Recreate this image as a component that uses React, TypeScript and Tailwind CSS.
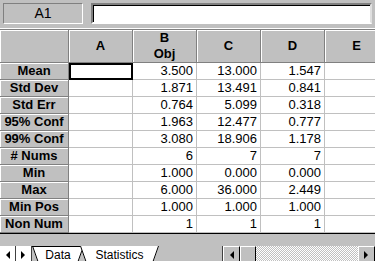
import React from "react";

type StatRow = {
  label: string;
  values: string[];
};

const columns = ["A", "B", "C", "D", "E"];

const stats: StatRow[] = [
  { label: "Mean", values: ["", "3.500", "13.000", "1.547", ""] },
  { label: "Std Dev", values: ["", "1.871", "13.491", "0.841", ""] },
  { label: "Std Err", values: ["", "0.764", "5.099", "0.318", ""] },
  { label: "95% Conf", values: ["", "1.963", "12.477", "0.777", ""] },
  { label: "99% Conf", values: ["", "3.080", "18.906", "1.178", ""] },
  { label: "# Nums", values: ["", "6", "7", "7", ""] },
  { label: "Min", values: ["", "1.000", "0.000", "0.000", ""] },
  { label: "Max", values: ["", "6.000", "36.000", "2.449", ""] },
  { label: "Min Pos", values: ["", "1.000", "1.000", "1.000", ""] },
  { label: "Non Num", values: ["", "1", "1", "1", ""] },
];

const headerCell =
  "bg-[#c0c0c0] border-r border-b border-[#808080] shadow-[inset_1px_1px_0_#ffffff] font-bold text-[13px] text-black";

const Arrow = ({ dir }: { dir: "left" | "right" }) => (
  <svg width="5" height="8" viewBox="0 0 5 8">
    {dir === "left" ? (
      <polygon points="5,0 5,8 1,4" fill="#000" />
    ) : (
      <polygon points="0,0 0,8 4,4" fill="#000" />
    )}
  </svg>
);

const SheetTab = ({
  label,
  active,
  className,
  width,
}: {
  label: string;
  active?: boolean;
  className: string;
  width: number;
}) => (
  <div className={`relative h-full flex justify-center pt-[2px] ${className}`}>
    <svg
      className="absolute inset-0"
      width={width}
      height="17"
      viewBox={`0 0 ${width} 17`}
    >
      <polygon
        points={`0,0 ${width},0 ${width - 6},17 6,17`}
        fill={active ? "#ffffff" : "#ffffff"}
      />
      <line x1="0.5" y1="0" x2="6.5" y2="17" stroke="#000" />
      <line x1={width - 0.5} y1="0" x2={width - 6.5} y2="17" stroke="#000" />
      {!active && <line x1="0" y1="0.5" x2={width} y2="0.5" stroke="#000" />}
    </svg>
    <span className="relative text-[12px] leading-[14px] text-black">
      {label}
    </span>
  </div>
);

export default function App() {
  return (
    <div className="w-[375px] h-[261px] overflow-hidden bg-[#c0c0c0] font-['Liberation_Sans',Arial,sans-serif]">
      {/* name box + formula bar */}
      <div className="h-[29px] flex items-start gap-[8px] pt-[3px] pl-[3px] pr-[3px] border-b border-white">
        <div className="w-[80px] h-[21px] flex items-center justify-center border border-t-[#808080] border-l-[#808080] border-b-white border-r-white text-[14px] text-black">
          A1
        </div>
        <div className="flex-1 h-[21px] bg-white border-2 border-t-[#808080] border-l-[#808080] border-b-white border-r-[#dfdfdf] shadow-[inset_1px_1px_0_#000]" />
      </div>

      {/* sheet grid */}
      <div className="border-t border-[#808080] bg-white grid grid-cols-[69px_64px_64px_64px_64px_64px]">
        <div className={`${headerCell} h-[33px]`} />
        {columns.map((col) => (
          <div
            key={`col-${col}`}
            className={`${headerCell} h-[33px] flex flex-col items-center justify-center leading-[16px]`}
          >
            <span>{col}</span>
            {col === "B" ? <span>Obj</span> : <></>}
          </div>
        ))}

        {stats.map((row, rowIndex) => (
          <React.Fragment key={`row-${row.label}`}>
            <div
              className={`${headerCell} h-[17px] flex items-center justify-center leading-[16px]`}
            >
              {row.label}
            </div>
            {row.values.map((v, vi) => (
              <div
                key={`cell-${rowIndex}-${vi}`}
                className="relative h-[17px] border-r border-b border-[#c0c0c0] flex items-center justify-end pr-[3px] text-[13px] leading-[16px] text-black"
              >
                {rowIndex === 0 && vi === 0 ? (
                  <div className="absolute top-0 left-0 right-[-1px] bottom-[-1px] border-2 border-black z-10" />
                ) : (
                  <></>
                )}
                {v}
              </div>
            ))}
          </React.Fragment>
        ))}
      </div>

      {/* empty band under the grid */}
      <div className="h-[13px] border-t border-black" />

      {/* tabs + horizontal scroll bar */}
      <div className="h-[17px] flex">
        <div className="w-[16px] flex items-center justify-center border-r border-[#404040] bg-white">
          <Arrow dir="left" />
        </div>
        <div className="w-[16px] flex items-center justify-center border-r border-[#404040] bg-white">
          <Arrow dir="right" />
        </div>
        <SheetTab label="Data" className="w-[52px]" width={52} />
        <SheetTab
          label="Statistics"
          active
          className="w-[79px] -ml-[4px] z-10"
          width={79}
        />
        <div className="flex-1" />
        <div className="w-[153px] flex border-l border-[#404040]">
          <div className="w-[17px] flex items-center justify-center bg-[#c0c0c0] border border-t-white border-l-white border-b-black border-r-black">
            <Arrow dir="left" />
          </div>
          <div className="w-[16px] bg-[#c0c0c0] border border-t-white border-l-white border-b-black border-r-black" />
          <div className="flex-1 bg-[repeating-conic-gradient(#c0c0c0_0%_25%,#ffffff_0%_50%)] bg-[length:2px_2px]" />
          <div className="w-[17px] flex items-center justify-center bg-[#c0c0c0] border border-t-white border-l-white border-b-black border-r-black">
            <Arrow dir="right" />
          </div>
        </div>
      </div>
    </div>
  );
}
